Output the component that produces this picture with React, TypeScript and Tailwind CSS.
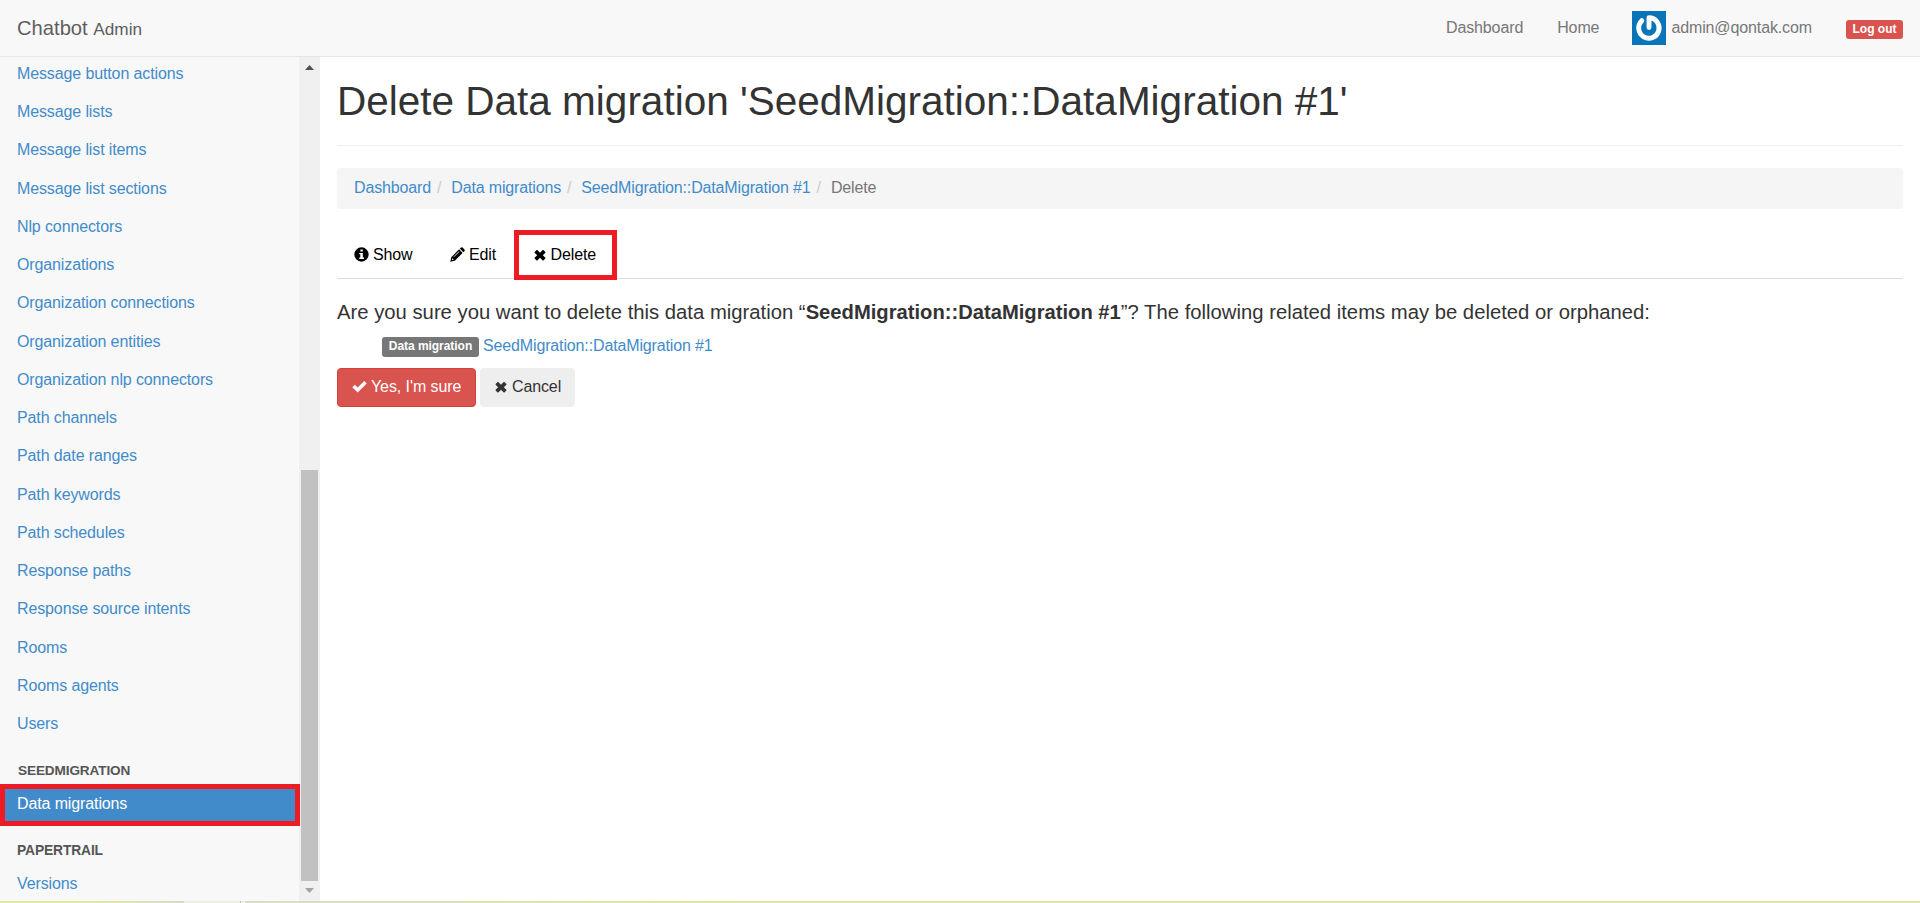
import type { ReactNode } from "react";

const models = [
  "Message button actions", "Message lists", "Message list items", "Message list sections",
  "Nlp connectors", "Organizations", "Organization connections", "Organization entities",
  "Organization nlp connectors", "Path channels", "Path date ranges", "Path keywords",
  "Path schedules", "Response paths", "Response source intents", "Rooms", "Rooms agents", "Users",
];

function Icon({ d, box, className }: { d: string; box: string; className: string }) {
  return (
    <svg viewBox={box} className={className} fill="currentColor" aria-hidden="true">
      <path d={d} fillRule="evenodd" />
    </svg>
  );
}

const TimesIcon = () => (
  <Icon box="0 0 12 12" className="h-[12px] w-[12px]" d="M2.6 1H3.3L6 3.7L8.7 1H9.4L11.4 3V3.7L8.8 6.2L11.4 8.8V9.5L9.4 11.4H8.7L6 8.8L3.3 11.4H2.6L.6 9.5V8.8L3.2 6.2L.6 3.7V3Z" />
);

function Navbar() {
  return (
    <header className="flex h-[57px] shrink-0 items-start justify-between border-b border-[#e7e7e7] bg-[#f8f8f8] px-[17px] text-[#777]">
      <div className="pt-[16px] text-[20.2px] leading-[24px] tracking-normal text-[#5e5e5e]">
        Chatbot <small className="text-[17.2px]">Admin</small>
      </div>
      <nav className="flex items-start">
        <a className="mt-[17px] leading-[22px]">Dashboard</a>
        <a className="mt-[17px] ml-[34px] leading-[22px]">Home</a>
        <svg viewBox="0 0 34 34" className="mt-[11px] ml-[33px] h-[34px] w-[34px]">
          <rect width="34" height="34" fill="#0a74b9" />
          <path d="M9.8 9.7A10.2 10.2 0 1 0 17 6.8V16.5" fill="none" stroke="#fff" strokeWidth="4.9" strokeLinecap="round" strokeLinejoin="round" />
        </svg>
        <a className="mt-[17px] ml-[5px] leading-[22px]">admin@qontak.com</a>
        <span className="mt-[20px] ml-[34px] h-[19px] w-[57px] rounded-[3px] bg-[#d9534f] text-center text-[12px] leading-[18px] font-bold tracking-normal text-white">Log out</span>
      </nav>
    </header>
  );
}

function Sidebar() {
  return (
    <aside className="flex w-[320px] shrink-0 bg-[#f8f8f8]">
      <div className="relative z-10 w-[299px] text-[#428bca]">
        <ul className="-mt-[2px]">
          {models.map((m) => (
            <li key={m} className="h-[38.235px] pt-[8px] pl-[17px] leading-[22px]">{m}</li>
          ))}
        </ul>
        <h3 className="mt-[17px] pl-[18px] text-[13.6px] leading-[22px] font-bold text-[#555]">SEEDMIGRATION</h3>
        <div className="mt-[2px] h-[42px] w-[300px] border-[5px] border-[#ed1c24] bg-[#428bca] pt-[4px] pl-[12px] leading-[22px] text-white">Data migrations</div>
        <h3 className="mt-[14px] pl-[17px] text-[13.8px] leading-[22px] font-bold text-[#555]">PAPERTRAIL</h3>
        <div className="mt-[11px] pl-[17px] leading-[22px]">Versions</div>
      </div>
      <div className="flex w-[21px] flex-col items-center bg-[#f0f0f0]">
        <svg viewBox="0 0 9 5" className="mt-[8px] h-[5px] w-[9px]"><path d="M0 5L4.5 0L9 5Z" fill="#505050" /></svg>
        <div className="mt-[400px] h-[411px] w-[17px] bg-[#c1c1c1]" />
        <svg viewBox="0 0 9 5" className="mt-[7px] h-[5px] w-[9px]"><path d="M0 0L4.5 5L9 0Z" fill="#a3a3a3" /></svg>
      </div>
    </aside>
  );
}

function Breadcrumb() {
  const links = ["Dashboard", "Data migrations", "SeedMigration::DataMigration #1"];
  return (
    <nav className="mt-[22px] flex h-[41px] rounded-[4px] bg-[#f5f5f5] pt-[9px] pl-[17px] leading-[22px] tracking-[-0.15px] text-[#428bca]">
      {links.map((l) => (
        <span key={l} className="flex">
          {l}
          <span className="w-[20.3px] pl-[6px] text-[#ccc]">/</span>
        </span>
      ))}
      <span className="text-[#777]">Delete</span>
    </nav>
  );
}

function Tab({ icon, label, className }: { icon: ReactNode; label: string; className: string }) {
  return (
    <a className={className}>
      {icon}
      <span>{label}</span>
    </a>
  );
}

function Content() {
  return (
    <main className="min-w-0 flex-1 pr-[17px] pl-[17px] text-[#333]">
      <h1 className="border-b border-[#eee] pt-[23px] pb-[22px] text-[40.5px] leading-[43px] tracking-normal">
        Delete Data migration 'SeedMigration::DataMigration #1'
      </h1>
      <Breadcrumb />
      <div className="mt-[21px] flex h-[49px] border-b border-[#ddd] text-black">
        <Tab
          className="flex h-[50px] w-[95px] items-center gap-[4px] pb-px pl-[17px] leading-[22px]"
          icon={<Icon box="0 0 14 14" className="h-[15px] w-[15px]" d="M7 .3A6.7 6.7 0 1 1 7 13.7A6.7 6.7 0 1 1 7 .3ZM6 2.3V4.3H8.2V2.3ZM4.9 5.5V6.8H5.9V9.9H4.9V11.2H9.3V9.9H8.2V5.5Z" />}
          label="Show"
        />
        <Tab
          className="flex h-[50px] w-[82px] items-center gap-[4px] pb-px pl-[18px] leading-[22px]"
          icon={<Icon box="0 0 14 14" className="h-[15px] w-[15px]" d="M.3 13.7L1.2 9.5L8.5 2.2L11.8 5.5L4.5 12.8ZM9.2 1.5L10.3.5Q11 -.1 11.7.5L13.5 2.3Q14.1 3 13.5 3.7L12.5 4.8ZM2.1 10.4L1.8 12.2L3.6 11.9ZM8.4 4L3.3 9L3.7 9.4L8.8 4.4Z" />}
          label="Edit"
        />
        <Tab
          className="flex h-[50px] w-[103px] items-center gap-[4.5px] border-[5px] border-[#ed1c24] pb-px pl-[15px] leading-[22px]"
          icon={<TimesIcon />}
          label="Delete"
        />
      </div>
      <p className="mt-[19px] text-[20.27px] leading-[28px] tracking-normal whitespace-nowrap">
        Are you sure you want to delete this data migration “<strong className="text-[20.2px]">SeedMigration::DataMigration #1</strong>”? The following related items may be deleted or orphaned:
      </p>
      <div className="mt-[9px] flex h-[22px] items-start pl-[45px] leading-[22px]">
        <span className="mt-[2px] mr-[4px] h-[20px] w-[97px] rounded-[3px] bg-[#777] text-center text-[12px] leading-[18px] font-bold tracking-[-0.05px] text-white">Data migration</span>
        <a className="tracking-[-0.14px] text-[#428bca]">SeedMigration::DataMigration #1</a>
      </div>
      <div className="mt-[11px] flex gap-[4px]">
        <button className="flex h-[39px] w-[139px] items-center gap-[4px] rounded-[4px] border border-[#d43f3a] bg-[#d9534f] pb-[2px] pl-[14px] tracking-[-0.08px] whitespace-nowrap text-white">
          <Icon box="0 0 15 13" className="h-[13px] w-[15px]" d="M.3 7.2L2.8 4.7L5.7 7.6L12.2 1.1L14.7 3.6L5.7 12.4Z" />
          Yes, I'm sure
        </button>
        <button className="flex h-[39px] w-[95px] items-center gap-[5px] rounded-[4px] bg-[#eee] pb-[2px] pl-[15px] tracking-[-0.12px]">
          <TimesIcon />
          Cancel
        </button>
      </div>
    </main>
  );
}

export default function App() {
  return (
    <div className="flex h-[903px] flex-col overflow-hidden bg-white font-['Liberation_Sans',Arial,sans-serif] text-[16px] tracking-[-0.12px]">
      <Navbar />
      <div className="flex h-[844px] shrink-0 overflow-hidden">
        <Sidebar />
        <Content />
      </div>
      <div className="flex h-[2px] shrink-0">
        <div className="w-[184px] bg-linear-to-r from-[#e2e8a0] from-40% to-[#d7dcc6]" />
        <div className="w-[56px] bg-[#eef0e2]" />
        <div className="w-px bg-[#c3c9ae]" />
        <div className="w-[4px] bg-[#eef0e2]" />
        <div className="flex-1 bg-linear-to-r from-[#d8dec4] to-[#dfe6a6] to-30%" />
      </div>
    </div>
  );
}
